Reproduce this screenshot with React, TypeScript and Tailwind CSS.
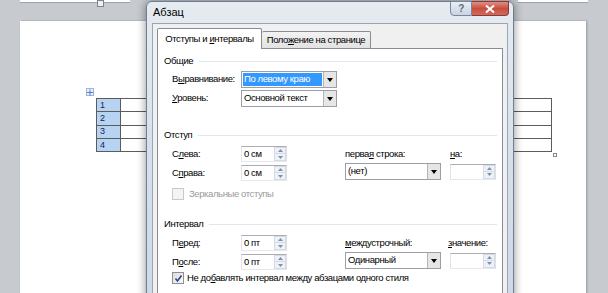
import React from "react";

const U = ({ children }: { children: React.ReactNode }) => <span className="underline underline-offset-[1px]">{children}</span>;

function Spin({ value }: { value?: string }) {
  return (
    <div className="flex h-[16px] w-[46px] border border-[#abadb3] border-r-[#dbdfe6] border-b-[#e3e9ef] border-l-[#e2e3ea] bg-white">
      <div className="flex-1 pl-[2px] leading-[14px] text-black">{value ?? ""}</div>
      <div className="flex w-[12px] flex-col">
        <div className="flex h-[7px] items-center justify-center border border-[#d4dbe4] bg-[#eef2f7]">
          <svg width="5" height="3" viewBox="0 0 5 3"><path d="M0 3 L2.5 0 L5 3 Z" fill="#7d8fae" /></svg>
        </div>
        <div className="flex h-[7px] items-center justify-center border border-t-0 border-[#d4dbe4] bg-[#eef2f7]">
          <svg width="5" height="3" viewBox="0 0 5 3"><path d="M0 0 L2.5 3 L5 0 Z" fill="#7d8fae" /></svg>
        </div>
      </div>
    </div>
  );
}

function Select({ value, selected, w = 96, h = 17 }: { value: string; selected?: boolean; w?: number; h?: number }) {
  return (
    <div className="flex border border-[#9a9ea8] bg-white" style={{ width: w, height: h }}>
      <div className="flex flex-1 items-center pl-[1px] pr-[1px]">
        {selected ? (
          <div className="flex h-[13px] w-full items-center bg-[#3399ff] pl-[1px] text-white">{value}</div>
        ) : (
          <div className="pl-[1px] text-black">{value}</div>
        )}
      </div>
      <div className="flex w-[13px] items-center justify-center border-l border-[#b5b5b5] bg-[#e6e6e6]">
        <svg width="6" height="4" viewBox="0 0 6 4"><path d="M0 0 L6 0 L3 4 Z" fill="#000" /></svg>
      </div>
    </div>
  );
}

function Heading({ text }: { text: string }) {
  return (
    <div className="flex h-[14px] items-center pl-[6px] pr-[5px]">
      <span className="text-black">{text}</span>
      <div className="ml-[6px] h-[1px] flex-1 bg-[#dfe6ec]" />
    </div>
  );
}

function CheckBox({ checked, disabled }: { checked?: boolean; disabled?: boolean }) {
  return (
    <div
      className={
        "flex h-[12px] w-[12px] items-center justify-center border " +
        (disabled ? "border-[#c9c9c9] bg-[#f4f4f4]" : "border-[#8e8f8f] bg-gradient-to-br from-[#dcdcdc] to-[#fafafa]")
      }
    >
      {checked && (
        <svg width="9" height="9" viewBox="0 0 9 9">
          <path d="M1.5 4.5 L3.5 7 L7.5 1.5" stroke="#2a4595" strokeWidth="1.6" fill="none" />
        </svg>
      )}
    </div>
  );
}

export default function App() {
  return (
    <div className="relative h-[293px] w-[608px] overflow-hidden bg-[#c7cace] font-['Liberation_Sans',sans-serif] text-[9.5px] tracking-[-0.4px] text-black">
      {/* document */}
      <div className="flex flex-col">
        <div className="flex h-[3px]">
          <div className="ml-[20px] h-[3px] w-[110px] border-b border-[#9da3ab] bg-white" />
          <div className="ml-[388px] h-[3px] w-[70px] border-b border-[#9da3ab] bg-white" />
        </div>
        <div className="ml-[20px] mt-[18px] h-[300px] w-[566px] bg-white shadow-[1px_0_2px_rgba(0,0,0,0.25)]">
          <div className="relative ml-[76px] mt-[77px] w-[456px]">
            <div className="absolute left-[-10px] top-[-10px] flex h-[8px] w-[8px] items-center justify-center border border-[#9fb6d6] bg-[#e8f0fa]">
              <svg width="7" height="7" viewBox="0 0 7 7"><path d="M3.5 0 V7 M0 3.5 H7" stroke="#3a6fc4" strokeWidth="1" /></svg>
            </div>
            <div className="flex flex-col border-t-[1.5px] border-l-[1.5px] border-[#5c5c5c]">
              {["1", "2", "3", "4"].map((n) => (
                <div key={n} className="flex h-[13.3px] border-b-[1.5px] border-r-[1.5px] border-[#5c5c5c]">
                  <div className="flex w-[24px] items-center border-r-[1.5px] border-[#5c5c5c] bg-[#b7d3f2] pl-[3px] text-[9px] leading-none text-[#1a1a60]">
                    {n}
                  </div>
                  <div className="flex-1" />
                </div>
              ))}
            </div>
            <div className="absolute right-[-5px] bottom-[-5px] h-[4px] w-[4px] border border-[#8a8a8a] bg-white" />
          </div>
        </div>
      </div>

      {/* ruler marker */}
      <div className="absolute left-[97px] top-0 h-[7px] w-[7px] border border-[#7c8490] bg-[#eef0f3]" />

      {/* dialog */}
      <div className="absolute left-[146px] top-[1px] h-[310px] w-[368px] rounded-t-[6px] border border-[#6f7f93] bg-gradient-to-b from-[#e6ebf1] via-[#d7e0ea] to-[#cdd9e6] shadow-[0_0_10px_rgba(0,0,0,0.45)]">
        {/* title bar */}
        <div className="flex h-[21px]">
          <div className="pl-[6px] pt-[2px] text-[11px] tracking-normal text-black">Абзац</div>
          <div className="flex-1" />
          <div className="mr-[4px] flex h-[15px] -mt-[1px]">
            <div className="flex w-[22px] items-center justify-center rounded-bl-[4px] border border-[#7a8699] bg-gradient-to-b from-[#e9eef4] to-[#c9d4e1] text-[10px] font-bold text-[#5e6a78]">
              ?
            </div>
            <div className="flex w-[37px] items-center justify-center rounded-br-[4px] border border-l-0 border-[#8a3a34] bg-gradient-to-b from-[#e08e82] via-[#c74d3f] to-[#d06a5c]">
              <svg width="10" height="8" viewBox="0 0 10 8"><path d="M1 0.5 L9 7.5 M9 0.5 L1 7.5" stroke="#fff" strokeWidth="2" /></svg>
            </div>
          </div>
        </div>
        {/* client */}
        <div className="mx-[5px] h-[300px] border border-[#98a6b8] bg-[#f0f0f0] px-[4px] pt-[4px]">
          {/* tabs */}
          <div className="flex h-[20px] items-end">
            <div className="relative z-10 -mb-[1px] flex h-[21px] w-[105px] items-center justify-center rounded-t-[2px] border border-b-0 border-[#898c95] bg-white">
              <span className="whitespace-nowrap">Отступы и <U>и</U>нтервалы</span>
            </div>
            <div className="flex h-[17px] w-[109px] items-center justify-center rounded-t-[2px] border border-l-0 border-b-0 border-[#898c95] bg-gradient-to-b from-[#f3f3f3] to-[#e2e2e2]">
              <span className="whitespace-nowrap">Поло<U>ж</U>ение на странице</span>
            </div>
          </div>
          {/* panel */}
          <div className="h-[260px] w-[346px] border border-[#898c95] bg-white pt-[5px]">
            <Heading text="Общие" />
            <div className="mt-[3px] flex h-[17px] items-center pl-[14px]">
              <div className="w-[69px]">В<U>ы</U>равнивание:</div>
              <Select value="По левому краю" selected />
            </div>
            <div className="mt-[2px] flex h-[17px] items-center pl-[14px]">
              <div className="w-[69px]"><U>У</U>ровень:</div>
              <Select value="Основной текст" />
            </div>
            <div className="mt-[21px]">
              <Heading text="Отступ" />
            </div>
            <div className="mt-[4px] flex h-[16px] items-center pl-[14px]">
              <div className="w-[69px]">С<U>л</U>ева:</div>
              <Spin value="0 см" />
              <div className="ml-[58px] w-[105px]">перва<U>я</U> строка:</div>
              <div><U>н</U>а:</div>
            </div>
            <div className="mt-[3px] flex h-[16px] items-center pl-[14px]">
              <div className="w-[69px]">С<U>п</U>рава:</div>
              <Spin value="0 см" />
              <div className="ml-[58px] -mt-[3px]">
                <Select value="(нет)" />
              </div>
              <div className="ml-[9px] -mt-[3px]">
                <Spin />
              </div>
            </div>
            <div className="mt-[6px] flex h-[14px] items-center pl-[14px]">
              <CheckBox disabled />
              <span className="ml-[5px] text-[#9a9a9a]">Зеркальные отступы</span>
            </div>
            <div className="mt-[16px]">
              <Heading text="Интервал" />
            </div>
            <div className="mt-[4px] flex h-[16px] items-center pl-[14px]">
              <div className="w-[69px]">П<U>е</U>ред:</div>
              <Spin value="0 пт" />
              <div className="ml-[58px] w-[103px]"><U>м</U>еждустрочный:</div>
              <div><U>з</U>начение:</div>
            </div>
            <div className="mt-[3px] flex h-[16px] items-center pl-[14px]">
              <div className="w-[69px]">П<U>о</U>сле:</div>
              <Spin value="0 пт" />
              <div className="ml-[58px] -mt-[3px]">
                <Select value="Одинарный" />
              </div>
              <div className="ml-[9px] -mt-[3px]">
                <Spin />
              </div>
            </div>
            <div className="mt-[1px] flex h-[14px] items-center pl-[14px]">
              <CheckBox checked />
              <span className="ml-[3px]">Не до<U>б</U>авлять интервал между абзацами одного стиля</span>
            </div>
          </div>
        </div>
      </div>
    </div>
  );
}
